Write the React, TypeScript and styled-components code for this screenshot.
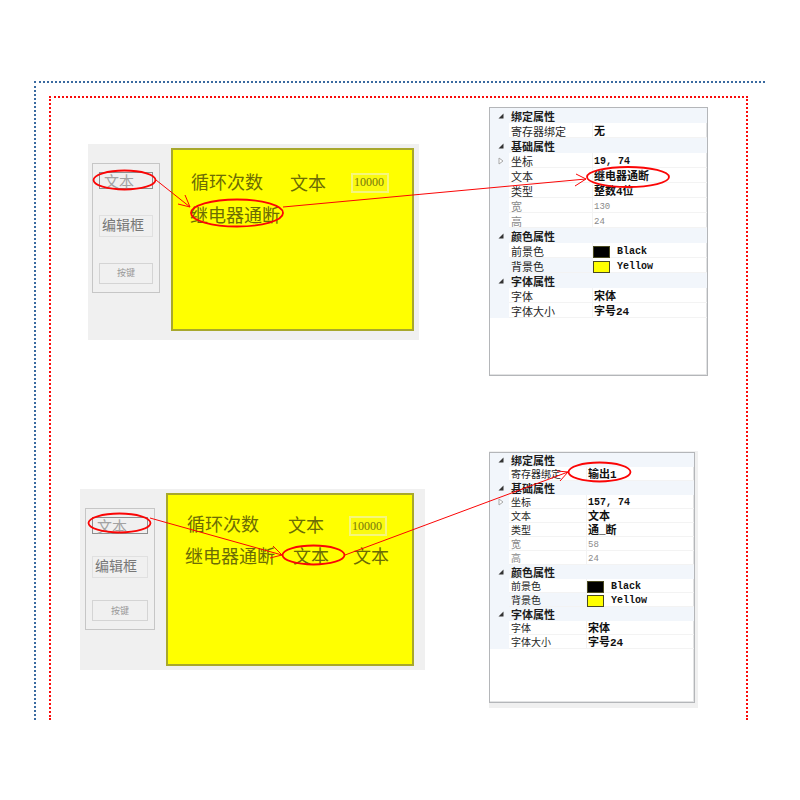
import React from "react";
import styled, { createGlobalStyle, css } from "styled-components";

const GlobalStyle = createGlobalStyle`
  * { box-sizing: border-box; }
  body {
    margin: 0;
    background: #ffffff;
    font-family: "Noto Sans CJK SC", sans-serif;
  }
  button, input { margin: 0; font-family: inherit; }
`;

const Page = styled.main`
  padding: 81px 35px 80px 34px;
`;

const OuterFrame = styled.div`
  padding: 13px 17px 0 13px;
  border-top: 2px dotted #3a6aa0;
  border-left: 2px dotted #3a6aa0;
`;

const InnerFrame = styled.div`
  display: flex;
  flex-direction: column;
  gap: 75px;
  padding: 9px 0 12px;
  border: 2px dotted #fb0a0a;
  border-bottom: none;
`;

const Scene = styled.section<{ $indent: number; $gap: number }>`
  position: relative;
  display: flex;
  align-items: center;
  gap: ${(p) => p.$gap}px;
  padding-left: ${(p) => p.$indent}px;
`;

const Annotations = styled.svg`
  position: absolute;
  top: 0;
  left: 0;
  width: 100%;
  height: 100%;
  overflow: visible;
  pointer-events: none;
  fill: none;
  stroke: #fb0505;
`;

const Designer = styled.div<{ $padding: string }>`
  display: flex;
  flex: none;
  align-items: flex-start;
  gap: 11px;
  padding: ${(p) => p.$padding};
  background: #f0f0f0;
`;

const Toolbox = styled.div<{ $width: number; $gap: number }>`
  display: flex;
  flex-direction: column;
  gap: ${(p) => p.$gap}px;
  width: ${(p) => p.$width}px;
  margin-top: 15px;
  padding: 8px 6px;
  border: 1px solid #c6c6c6;
`;

const Tool = styled.button<{ $kind: "text" | "edit" | "key" }>`
  display: flex;
  align-items: center;
  padding: 0;
  border: 1px solid #e0e0e0;
  background: transparent;
  ${(p) =>
    p.$kind === "text" &&
    css`
      height: 17px;
      padding-left: 4px;
      border-color: #8e8e8e;
      color: #a2a2a2;
      font-size: 15px;
      line-height: 15px;
    `}
  ${(p) =>
    p.$kind === "edit" &&
    css`
      height: 22px;
      padding: 0 0 4px 2px;
      color: #777777;
      font-size: 14px;
      line-height: 16px;
    `}
  ${(p) =>
    p.$kind === "key" &&
    css`
      height: 21px;
      justify-content: center;
      border-color: #d4d4d4;
      color: #999999;
      font-size: 9px;
      line-height: 12px;
    `}
`;

const Screen = styled.div<{ $width: number; $height: number }>`
  position: relative;
  width: ${(p) => p.$width}px;
  height: ${(p) => p.$height}px;
  border: 2px solid #a8a82c;
  background: #ffff00;
`;

const ScreenLabel = styled.span<{ $x: number; $y: number }>`
  position: absolute;
  left: ${(p) => p.$x}px;
  top: ${(p) => p.$y}px;
  color: #6c6c05;
  font-size: 18px;
  line-height: 24px;
  white-space: nowrap;
`;

const ScreenInput = styled.input<{ $x: number; $y: number }>`
  position: absolute;
  left: ${(p) => p.$x}px;
  top: ${(p) => p.$y}px;
  width: 38px;
  height: 20px;
  padding: 0 0 0 1px;
  border: 2px solid #f6f67c;
  background: #fafa10;
  color: #77770c;
  font-family: "Liberation Serif", serif;
  font-size: 12px;
`;

const GridBacking = styled.div<{ $padded: boolean }>`
  flex: none;
  padding: ${(p) => (p.$padded ? "1px 3px 5px 0" : "0")};
  background: #f0f0f0;
`;

const PropertyPanel = styled.div<{ $width: number; $height: number }>`
  width: ${(p) => p.$width}px;
  min-height: ${(p) => p.$height}px;
  border: 1px solid #b4b6b9;
  box-shadow: inset -1px -1px #e2e3e4;
  background: #ffffff;
`;

const PropertyTable = styled.table<{ $row: number }>`
  width: 100%;
  border-collapse: collapse;
  table-layout: fixed;
  color: #1c1c1c;

  td, th {
    height: ${(p) => p.$row}px;
    padding: 0 0 0 2px;
    line-height: 12px;
    white-space: nowrap;
    text-align: left;
    vertical-align: middle;
  }
`;

const GutterCol = styled.col`
  width: 19px;
`;

const NameCol = styled.col<{ $width: number }>`
  width: ${(p) => p.$width}px;
`;

const Gutter = styled.td`
  background: #f2f6fb;
`;

const Category = styled.th`
  background: #f2f6fb;
  font-size: 11px;
  font-weight: 700;
`;

const NameCell = styled.th<{ $muted?: boolean; $selected?: boolean; $size: number }>`
  font-size: ${(p) => p.$size}px;
  font-weight: 400;
  color: ${(p) => (p.$muted ? "#8a8a8a" : "#262626")};
  background: ${(p) => (p.$selected ? "#f2f6fb" : "transparent")};
  box-shadow: inset 0 -1px #f3f3f3;
`;

const ValueCell = styled.td<{ $muted?: boolean; $latin?: boolean }>`
  box-shadow: inset 1px -1px #f3f3f3;
  && { padding-top: 2px; }
  color: ${(p) => (p.$muted ? "#8a8a8a" : "#111111")};
  font-family: "Liberation Mono", "Noto Sans CJK SC", monospace;
  font-size: ${(p) => (p.$muted ? 9 : p.$latin ? 10 : 11)}px;
  font-weight: ${(p) => (p.$muted ? 400 : 700)};
`;

const ColorValue = styled.span`
  display: flex;
  align-items: center;
  gap: 7px;
`;

const Swatch = styled.span<{ $color: string }>`
  width: 17px;
  height: 12px;
  margin-left: -1px;
  border: 1px solid #4a4a20;
  background: ${(p) => p.$color};
`;

const Expander = styled.button`
  display: flex;
  width: 15px;
  height: 12px;
  justify-content: flex-end;
  align-items: center;
  padding: 0 3px 0 0;
  border: none;
  background: transparent;

  svg { display: block; }
`;

type Property =
  | { kind: "category"; name: string }
  | {
      kind: "item";
      name: string;
      value: string;
      muted?: boolean;
      latin?: boolean;
      expandable?: boolean;
      color?: string;
      selected?: boolean;
    };

function buildProperties(binding: string, position: string, text: string, type: string, width: string): Property[] {
  return [
    { kind: "category", name: "绑定属性" },
    { kind: "item", name: "寄存器绑定", value: binding },
    { kind: "category", name: "基础属性" },
    { kind: "item", name: "坐标", value: position, latin: true, expandable: true },
    { kind: "item", name: "文本", value: text },
    { kind: "item", name: "类型", value: type },
    { kind: "item", name: "宽", value: width, muted: true },
    { kind: "item", name: "高", value: "24", muted: true },
    { kind: "category", name: "颜色属性" },
    { kind: "item", name: "前景色", value: "Black", latin: true, color: "#000000" },
    { kind: "item", name: "背景色", value: "Yellow", latin: true, color: "#ffff00", selected: true },
    { kind: "category", name: "字体属性" },
    { kind: "item", name: "字体", value: "宋体" },
    { kind: "item", name: "字体大小", value: "字号24" },
  ];
}

const relayProperties = buildProperties("无", "19, 74", "继电器通断", "整数4位", "130");
const outputProperties = buildProperties("输出1", "157, 74", "文本", "通_断", "58");

function OpenMark() {
  return (
    <svg width="6" height="6" viewBox="0 0 6 6" aria-hidden="true">
      <path d="M5.5 0.5V5.5H0.5Z" fill="#333333" />
    </svg>
  );
}

function ClosedMark() {
  return (
    <svg width="6" height="8" viewBox="0 0 6 8" aria-hidden="true">
      <path d="M1 1L5 4L1 7Z" fill="#ffffff" stroke="#a8a8a8" />
    </svg>
  );
}

interface PropertyGridProps {
  properties: Property[];
  width: number;
  height: number;
  row: number;
  nameWidth: number;
  nameSize: number;
  padded?: boolean;
}

function PropertyGrid({ properties, width, height, row, nameWidth, nameSize, padded = false }: PropertyGridProps) {
  return (
    <GridBacking $padded={padded}>
      <PropertyPanel $width={width} $height={height}>
        <PropertyTable $row={row}>
          <colgroup>
            <GutterCol />
            <NameCol $width={nameWidth} />
            <col />
          </colgroup>
          <tbody>
            {properties.map((p) =>
              p.kind === "category" ? (
                <tr key={p.name}>
                  <Gutter>
                    <Expander aria-label={p.name}>
                      <OpenMark />
                    </Expander>
                  </Gutter>
                  <Category colSpan={2}>{p.name}</Category>
                </tr>
              ) : (
                <tr key={p.name}>
                  <Gutter>
                    {p.expandable && (
                      <Expander aria-label={p.name}>
                        <ClosedMark />
                      </Expander>
                    )}
                  </Gutter>
                  <NameCell scope="row" $muted={p.muted} $selected={p.selected} $size={nameSize}>
                    {p.name}
                  </NameCell>
                  <ValueCell $muted={p.muted} $latin={p.latin}>
                    {p.color ? (
                      <ColorValue>
                        <Swatch $color={p.color} />
                        {p.value}
                      </ColorValue>
                    ) : (
                      p.value
                    )}
                  </ValueCell>
                </tr>
              )
            )}
          </tbody>
        </PropertyTable>
      </PropertyPanel>
    </GridBacking>
  );
}

function Tools({ width, gap }: { width: number; gap: number }) {
  return (
    <Toolbox $width={width} $gap={gap}>
      <Tool $kind="text">文本</Tool>
      <Tool $kind="edit">编辑框</Tool>
      <Tool $kind="key">按键</Tool>
    </Toolbox>
  );
}

function Ring({ cx, cy, rx, ry }: { cx: number; cy: number; rx: number; ry: number }) {
  return <ellipse cx={cx} cy={cy} rx={rx} ry={ry} strokeWidth="1.8" />;
}

function Arrow({ line, head }: { line: string; head: string }) {
  return (
    <g strokeWidth="1">
      <path d={line} />
      <path d={head} />
    </g>
  );
}

export default function App() {
  return (
    <>
      <GlobalStyle />
      <Page>
        <OuterFrame>
          <InnerFrame>
            <Scene $indent={37} $gap={70}>
              <Designer $padding="4px 5px 9px 4px">
                <Tools width={68} gap={26} />
                <Screen $width={243} $height={183}>
                  <ScreenLabel $x={18} $y={19}>循环次数</ScreenLabel>
                  <ScreenLabel $x={117} $y={20}>文本</ScreenLabel>
                  <ScreenInput $x={178} $y={23} aria-label="循环次数" defaultValue="10000" />
                  <ScreenLabel $x={17} $y={52}>继电器通断</ScreenLabel>
                </Screen>
              </Designer>
              <PropertyGrid
                properties={relayProperties}
                width={219}
                height={269}
                row={15}
                nameWidth={83}
                nameSize={11}
              />
              <Annotations aria-hidden="true">
                <Ring cx={73.5} cy={73} rx={31} ry={9.5} />
                <Ring cx={186} cy={106} rx={46} ry={13.5} />
                <Ring cx={577} cy={70} rx={41} ry={10} />
                <Arrow line="M105 73L139 100" head="M134 88L139 100L127 97" />
                <Arrow line="M232 100L535 72" head="M525 67L535 72L524 79" />
              </Annotations>
            </Scene>

            <Scene $indent={29} $gap={64}>
              <Designer $padding="4px 11px 4px 5px">
                <Tools width={70} gap={22} />
                <Screen $width={248} $height={173}>
                  <ScreenLabel $x={19} $y={16}>循环次数</ScreenLabel>
                  <ScreenLabel $x={120} $y={17}>文本</ScreenLabel>
                  <ScreenInput $x={181} $y={21} aria-label="循环次数" defaultValue="10000" />
                  <ScreenLabel $x={17} $y={48}>继电器通断</ScreenLabel>
                  <ScreenLabel $x={125} $y={48}>文本</ScreenLabel>
                  <ScreenLabel $x={185} $y={48}>文本</ScreenLabel>
                </Screen>
              </Designer>
              <PropertyGrid
                properties={outputProperties}
                width={206}
                height={251}
                row={14}
                nameWidth={77}
                nameSize={10}
                padded
              />
              <Annotations aria-hidden="true">
                <Ring cx={68.5} cy={72} rx={31} ry={9.5} />
                <Ring cx={262.5} cy={104} rx={31} ry={9.5} />
                <Ring cx={548.5} cy={21} rx={31} ry={9.5} />
                <Arrow line="M99 67L231 104" head="M222 95L231 104L219 107" />
                <Arrow line="M294 104L517 21" head="M506 20L517 21L509 30" />
              </Annotations>
            </Scene>
          </InnerFrame>
        </OuterFrame>
      </Page>
    </>
  );
}
